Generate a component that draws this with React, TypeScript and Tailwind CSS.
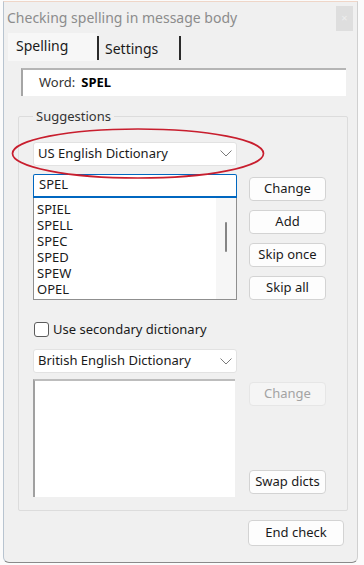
import { ReactNode } from 'react'

const suggestions = ['SPIEL', 'SPELL', 'SPEC', 'SPED', 'SPEW', 'OPEL']

function Chevron() {
  return (
    <svg width="12" height="7" viewBox="0 0 12 7" className="shrink-0">
      <polyline points="0.5,0.5 6,6 11.5,0.5" fill="none" stroke="#7a7a7a" strokeWidth="1" />
    </svg>
  )
}

function Dropdown({ label }: { label: string }) {
  return (
    <div className="flex h-[24px] w-[204px] items-center justify-between rounded-[3px] border border-[#e2e2e2] bg-white pl-[4px] pr-[4px]">
      <span>{label}</span>
      <Chevron />
    </div>
  )
}

function Button({ children, disabled, wide }: { children: ReactNode; disabled?: boolean; wide?: boolean }) {
  return (
    <div
      className={`flex h-[24px] items-center justify-center rounded-[4px] border ${
        wide ? 'h-[26px] w-[96px]' : 'w-[77px]'
      } ${disabled ? 'border-[#e6e6e6] bg-[#f5f5f5] text-[#a3a3a3]' : 'border-[#d3d3d3] bg-[#fdfdfd] text-[#1a1a1a]'}`}
    >
      {children}
    </div>
  )
}

export default function App() {
  return (
    <div className="relative h-[565px] w-[364px] overflow-hidden bg-[#fbfbfb] pl-[3px] pt-[1px] text-[13px] text-[#1a1a1a] [font-family:'Noto_Sans',sans-serif]">
      <div className="flex h-[562px] w-[355px] flex-col rounded-b-[6px] border border-t-[#efd6c8] border-r-[#d0d0d0] border-b-[#8a8a8a] border-l-[#b8c4d0] bg-[#f0f0f0]">
        {/* title bar */}
        <div className="flex h-[31px] items-center justify-between pl-[3px] pr-[4px]">
          <span className="text-[14px] text-[#8c8c8c]">Checking spelling in message body</span>
          <div className="mt-[1px] flex h-[25px] w-[17px] items-center justify-center bg-[#dedede] text-[11px] text-[#eeeeee]">×</div>
        </div>

        {/* tabs */}
        <div className="flex h-[28px] items-end pl-[4px] text-[14px]">
          <div className="flex h-[28px] w-[89px] items-center bg-[#f7f7f7] pl-[8px] pb-[4px]">Spelling</div>
          <div className="mb-[1px] flex h-[24px] w-[84px] items-center border-x-2 border-x-[#2a2a2a] pl-[6px]">Settings</div>
        </div>

        <div className="flex flex-1 flex-col px-[14px]">
          {/* word box */}
          <div className="ml-[3px] mt-[7px] flex h-[28px] w-[325px] items-center gap-[6px] border-l-2 border-t-2 border-l-[#a5a5a5] border-t-[#b5b5b5] bg-white pl-[16px]">
            <span className="text-[#333]">Word:</span>
            <span className="font-bold text-black">SPEL</span>
          </div>

          {/* suggestions group */}
          <fieldset className="mt-[11px] h-[404px] w-[330px] rounded-[2px] border border-[#dcdcdc] px-[14px]">
            <legend className="px-[3px] text-[13px] text-[#333]">Suggestions</legend>

            <div className="mt-[15px]">
              <Dropdown label="US English Dictionary" />
            </div>

            <div className="mt-[8px] flex gap-[12px]">
              <div className="flex w-[204px] flex-col">
                <div className="flex h-[24px] items-center rounded-t-[2px] border border-b-2 border-[#0067c0] bg-white pl-[5px]">SPEL</div>
                <div className="flex h-[102px] border border-t-0 border-[#8f8f8f] bg-white">
                  <div className="flex flex-1 flex-col pl-[3px] pt-[3px] leading-[16px]">
                    {suggestions.map((s) => (
                      <span key={s}>{s}</span>
                    ))}
                  </div>
                  <div className="flex w-[20px] justify-center bg-[#f6f6f6] pt-[24px]">
                    <div className="h-[30px] w-[2px] rounded-full bg-[#858585]" />
                  </div>
                </div>
              </div>
              <div className="mt-[3px] flex flex-col gap-[9px]">
                <Button>Change</Button>
                <Button>Add</Button>
                <Button>Skip once</Button>
                <Button>Skip all</Button>
              </div>
            </div>

            <label className="mt-[20px] flex items-center gap-[4px] pl-[1px]">
              <span className="h-[15px] w-[15px] rounded-[3px] border border-[#5b5b5b] bg-white" />
              <span>Use secondary dictionary</span>
            </label>

            <div className="mt-[10px]">
              <Dropdown label="British English Dictionary" />
            </div>

            <div className="mt-[6px] flex gap-[14px]">
              <div className="h-[118px] w-[202px] border-l-2 border-t-2 border-l-[#a0a0a0] border-t-[#bdbdbd] bg-white" />
              <div className="flex h-[118px] flex-col justify-between pt-[3px] pb-[3px]">
                <Button disabled>Change</Button>
                <Button>Swap dicts</Button>
              </div>
            </div>
          </fieldset>

          <div className="mt-[9px] flex justify-end">
            <div className="mr-[-1px]">
              <Button wide>End check</Button>
            </div>
          </div>
        </div>
      </div>

      {/* red annotation ellipse */}
      <svg className="pointer-events-none absolute left-[11px] top-[128px]" width="254" height="52" viewBox="0 0 254 52">
        <ellipse cx="127" cy="25.5" rx="125.5" ry="24.5" fill="none" stroke="#c81e2e" strokeWidth="1.7" />
      </svg>
    </div>
  )
}
